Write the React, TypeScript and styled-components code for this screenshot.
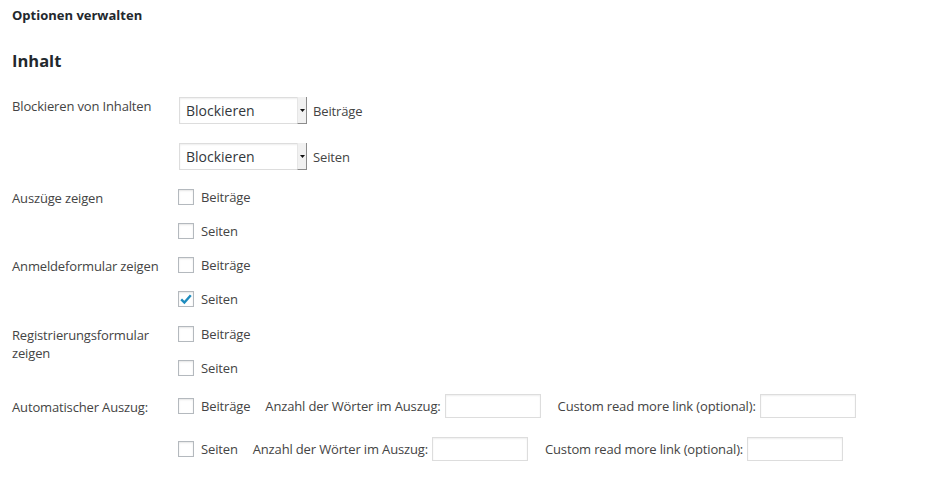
import { createGlobalStyle } from "styled-components"
import styled from "styled-components"

const GlobalStyle = createGlobalStyle`
  html, body {
    margin: 0;
    padding: 0;
    background: #fff;
  }
  body {
    font-family: "Open Sans", "Noto Sans", sans-serif;
    font-size: 13px;
    letter-spacing: -0.15px;
    color: #444;
  }
  * {
    box-sizing: border-box;
  }
`

type CheckItem = { label: string; checked?: boolean }

const checkRows: { label: string; items: CheckItem[] }[] = [
  { label: "Auszüge zeigen", items: [{ label: "Beiträge" }, { label: "Seiten" }] },
  {
    label: "Anmeldeformular zeigen",
    items: [{ label: "Beiträge" }, { label: "Seiten", checked: true }],
  },
  {
    label: "Registrierungsformular zeigen",
    items: [{ label: "Beiträge" }, { label: "Seiten" }],
  },
]

const Checkbox = ({ checked }: { checked?: boolean }) => (
  <CheckBoxBox>
    {checked && (
      <svg width="14" height="14" viewBox="0 0 14 14">
        <path
          d="M2.2 7.4 L5.4 10.6 L11.8 3.2"
          fill="none"
          stroke="#1e8cbe"
          strokeWidth="2.4"
          strokeLinecap="butt"
          strokeLinejoin="miter"
        />
      </svg>
    )}
  </CheckBoxBox>
)

const Select = () => (
  <SelectBox>
    <SelectValue>Blockieren</SelectValue>
    <SelectButton>
      <svg width="5" height="3" viewBox="0 0 5 3">
        <path d="M0 0 H5 L2.5 3 Z" fill="#111" />
      </svg>
    </SelectButton>
  </SelectBox>
)

const App = () => {
  return (
    <>
      <GlobalStyle />
      <Page>
        <Title>Optionen verwalten</Title>
        <SectionTitle>Inhalt</SectionTitle>
        <FormTable>
          <FormRow>
            <RowLabel>Blockieren von Inhalten</RowLabel>
            <FieldStack gap={19}>
              <SelectLine>
                <Select />
                <span>Beiträge</span>
              </SelectLine>
              <SelectLine>
                <Select />
                <span>Seiten</span>
              </SelectLine>
            </FieldStack>
          </FormRow>

          {checkRows.map(row => (
            <FormRow key={row.label}>
              <RowLabel>{row.label}</RowLabel>
              <FieldStack gap={18}>
                {row.items.map(item => (
                  <CheckLine key={item.label}>
                    <Checkbox checked={item.checked} />
                    <span>{item.label}</span>
                  </CheckLine>
                ))}
              </FieldStack>
            </FormRow>
          ))}

          <FormRow>
            <RowLabel offset={4}>Automatischer Auszug:</RowLabel>
            <FieldStack gap={19}>
              {["Beiträge", "Seiten"].map(type => (
                <ExcerptLine key={type}>
                  <CheckLine>
                    <Checkbox />
                    <span>{type}</span>
                  </CheckLine>
                  <InlineField>
                    <span>Anzahl der Wörter im Auszug:</span>
                    <TextInput type="text" />
                  </InlineField>
                  <InlineField>
                    <span>Custom read more link (optional):</span>
                    <TextInput type="text" />
                  </InlineField>
                </ExcerptLine>
              ))}
            </FieldStack>
          </FormRow>
        </FormTable>
      </Page>
    </>
  )
}

export default App

const Page = styled("div")({
  padding: "6px 12px 20px",
})

const Title = styled("h2")({
  margin: 0,
  fontSize: 13,
  lineHeight: "19px",
  fontWeight: 700,
  letterSpacing: 0,
  color: "#23282d",
})

const SectionTitle = styled("h3")({
  margin: "24px 0 0",
  fontSize: 16.5,
  lineHeight: "24px",
  fontWeight: 700,
  letterSpacing: 0,
  color: "#23282d",
})

const FormTable = styled("div")({
  display: "flex",
  flexDirection: "column",
  gap: 18.5,
  marginTop: 24,
})

const FormRow = styled("div")({
  display: "grid",
  gridTemplateColumns: "167px 1fr",
  alignItems: "start",
})

const RowLabel = styled("div")<{ offset?: number }>(({ offset = 0 }) => ({
  lineHeight: "18px",
  width: 155,
  paddingTop: offset,
  color: "#444",
}))

const FieldStack = styled("div")<{ gap: number }>(({ gap }) => ({
  display: "flex",
  flexDirection: "column",
  gap,
}))

const SelectLine = styled("div")({
  display: "flex",
  alignItems: "center",
  gap: 6,
  height: 27,
})

const SelectBox = styled("div")({
  display: "flex",
  width: 128,
  height: 27,
  border: "1px solid #ddd",
  background: "#fff",
  boxShadow: "inset 0 1px 2px rgba(0,0,0,0.07)",
})

const SelectValue = styled("span")({
  flex: 1,
  paddingLeft: 6,
  fontSize: 14,
  lineHeight: "25px",
  letterSpacing: 0,
  color: "#32373c",
})

const SelectButton = styled("span")({
  width: 10,
  display: "flex",
  alignItems: "center",
  justifyContent: "center",
  background: "#f1f1f1",
  borderLeft: "1px solid #e6e6e6",
  borderRight: "1px solid #8c8c8c",
  borderBottom: "1px solid #8c8c8c",
  marginTop: -1,
  marginBottom: -1,
  marginRight: -1,
})

const CheckLine = styled("label")({
  display: "flex",
  alignItems: "center",
  gap: 7,
  height: 16,
  lineHeight: "16px",
  marginLeft: -1,
})

const CheckBoxBox = styled("span")({
  width: 16,
  height: 16,
  flex: "none",
  display: "flex",
  alignItems: "center",
  justifyContent: "center",
  border: "1px solid #b4b9be",
  background: "#fff",
  boxShadow: "inset 0 1px 2px rgba(0,0,0,0.1)",
})

const ExcerptLine = styled("div")({
  display: "flex",
  alignItems: "center",
  height: 24,
  gap: 15,
})

const InlineField = styled("span")({
  display: "flex",
  alignItems: "center",
  gap: 4,
  marginRight: 2,
})

const TextInput = styled("input")({
  width: 96,
  height: 24,
  margin: 0,
  padding: "2px 4px",
  border: "1px solid #ddd",
  background: "#fff",
  boxShadow: "inset 0 1px 2px rgba(0,0,0,0.07)",
  outline: "none",
  fontFamily: "inherit",
  fontSize: 13,
})
